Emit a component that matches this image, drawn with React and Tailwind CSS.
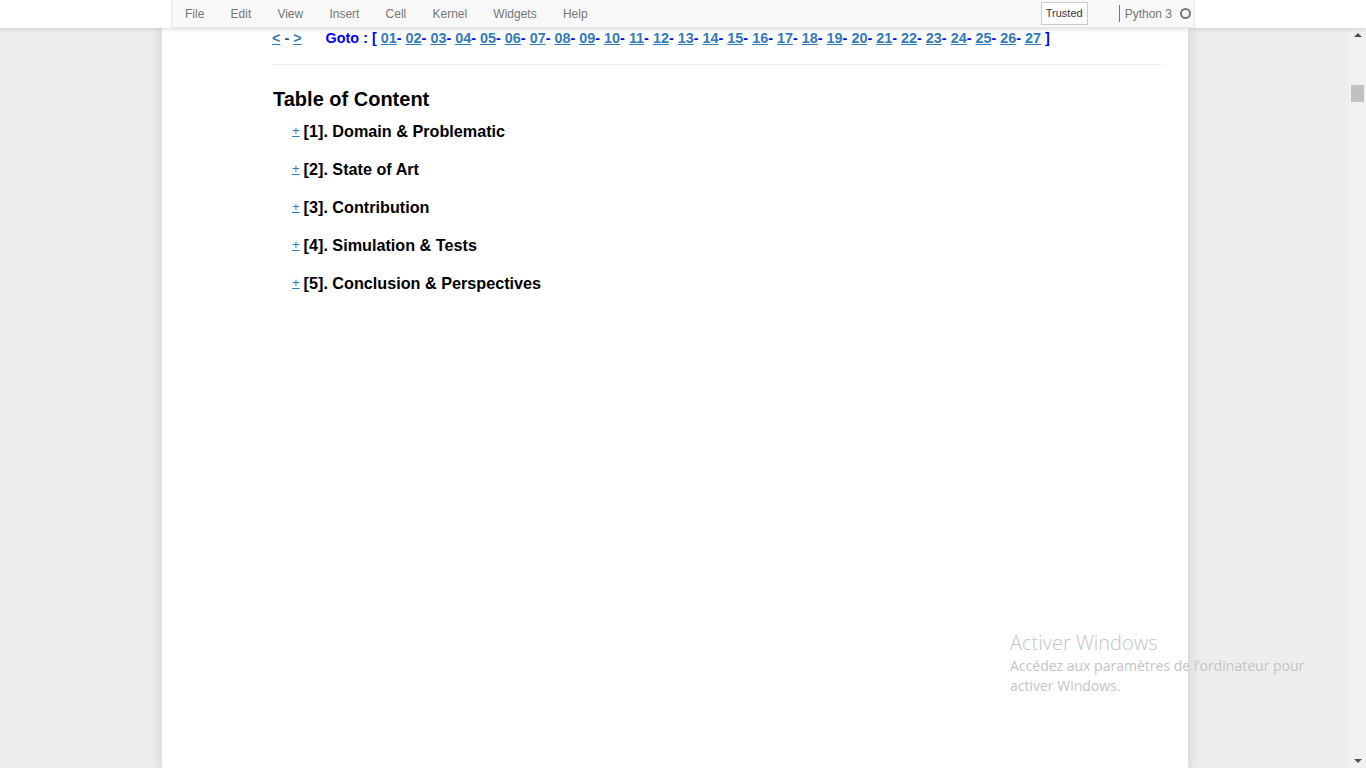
import React from "react";

const menus = ["File", "Edit", "View", "Insert", "Cell", "Kernel", "Widgets", "Help"];
const pages = Array.from({ length: 27 }, (_, i) => String(i + 1).padStart(2, "0"));
const sections = [
  "[1]. Domain & Problematic",
  "[2]. State of Art",
  "[3]. Contribution",
  "[4]. Simulation & Tests",
  "[5]. Conclusion & Perspectives",
];

const App = () => {
  return (
    <div className="relative flex h-screen flex-col overflow-hidden bg-[#eeeeee] font-['Liberation_Sans',Arial,sans-serif]">
      {/* header / menubar */}
      <div className="relative z-10 h-[28px] shrink-0 bg-white shadow-[0_1px_5px_rgba(0,0,0,0.15)]">
        <div className="ml-[171px] flex h-[28px] w-[1024px] items-center border-x border-b border-[#e7e7e7] bg-[#f8f8f8] text-[12px] text-[#777]">
          <div className="ml-[13px] flex items-center">
            {menus.map((m) => (
              <span key={m} className="mr-[26.2px]">
                {m}
              </span>
            ))}
          </div>
          <div className="ml-auto flex items-center">
            <span className="border border-[#ccc] bg-white px-[4px] py-[2px] text-[11px] text-[#333]">
              Trusted
            </span>
            <span className="ml-[31px] h-[17px] w-px bg-[#777]" />
            <span className="ml-[5px] text-[12px] text-[#777]">Python 3</span>
            <span className="ml-[8px] mr-[3px] h-[11px] w-[11px] rounded-full border-2 border-[#777]" />
          </div>
        </div>
      </div>

      {/* body */}
      <div className="flex flex-1">
        <div className="ml-[162px] w-[1026px] bg-white shadow-[0_0_12px_1px_rgba(87,87,87,0.2)]">
          <div className="ml-[110px] mr-[26px]">
            <div className="flex h-[22px] items-end whitespace-pre text-[14.4px] font-bold text-[#0000ff]">
              <span>
                <a className="text-[#337ab7] underline">{"<"}</a>
                <span className="text-[#23527c]">{" - "}</span>
                <a className="text-[#337ab7] underline">{">"}</a>
                {"      Goto : [ "}
                {pages.map((p, i) => (
                  <React.Fragment key={p}>
                    <a className="text-[#337ab7] underline">{p}</a>
                    {i < pages.length - 1 ? "- " : " ]"}
                  </React.Fragment>
                ))}
              </span>
            </div>
            <div className="mt-[14px] border-t border-[#eeeeee]" />
            <h1 className="ml-px mt-[22px] text-[20px] font-bold leading-[24px] text-black">Table of Content</h1>
            <ul className="mt-[1px] pl-[20px]">
              {sections.map((s) => (
                <li key={s} className="flex h-[38px] items-center text-[16.2px] font-bold text-black">
                  <a className="mr-[4px] text-[13px] font-normal text-[#337ab7] underline">+</a>
                  {s}
                </li>
              ))}
            </ul>
          </div>
        </div>
        <div className="flex-1" />
        {/* scrollbar */}
        <div className="flex w-[17px] flex-col items-center bg-[#f1f1f1]">
          <div className="mt-[5px] h-0 w-0 border-x-[4px] border-b-[4px] border-x-transparent border-b-[#505050]" />
          <div className="mt-[48px] h-[17px] w-[13px] bg-[#c1c1c1]" />
          <div className="flex-1" />
          <div className="mb-[5px] h-0 w-0 border-x-[4px] border-t-[4px] border-x-transparent border-t-[#505050]" />
        </div>
      </div>

      {/* windows activation watermark */}
      <div className="pointer-events-none absolute left-[1010px] top-[630px] z-20 font-['Open_Sans',sans-serif] text-[#c4c4c4]">
        <div className="text-[20px] leading-[26px] font-light">Activer Windows</div>
        <div className="text-[14px] leading-[20px]">Accédez aux paramètres de l’ordinateur pour</div>
        <div className="text-[14px] leading-[20px]">activer Windows.</div>
      </div>
    </div>
  );
};

export default App;
